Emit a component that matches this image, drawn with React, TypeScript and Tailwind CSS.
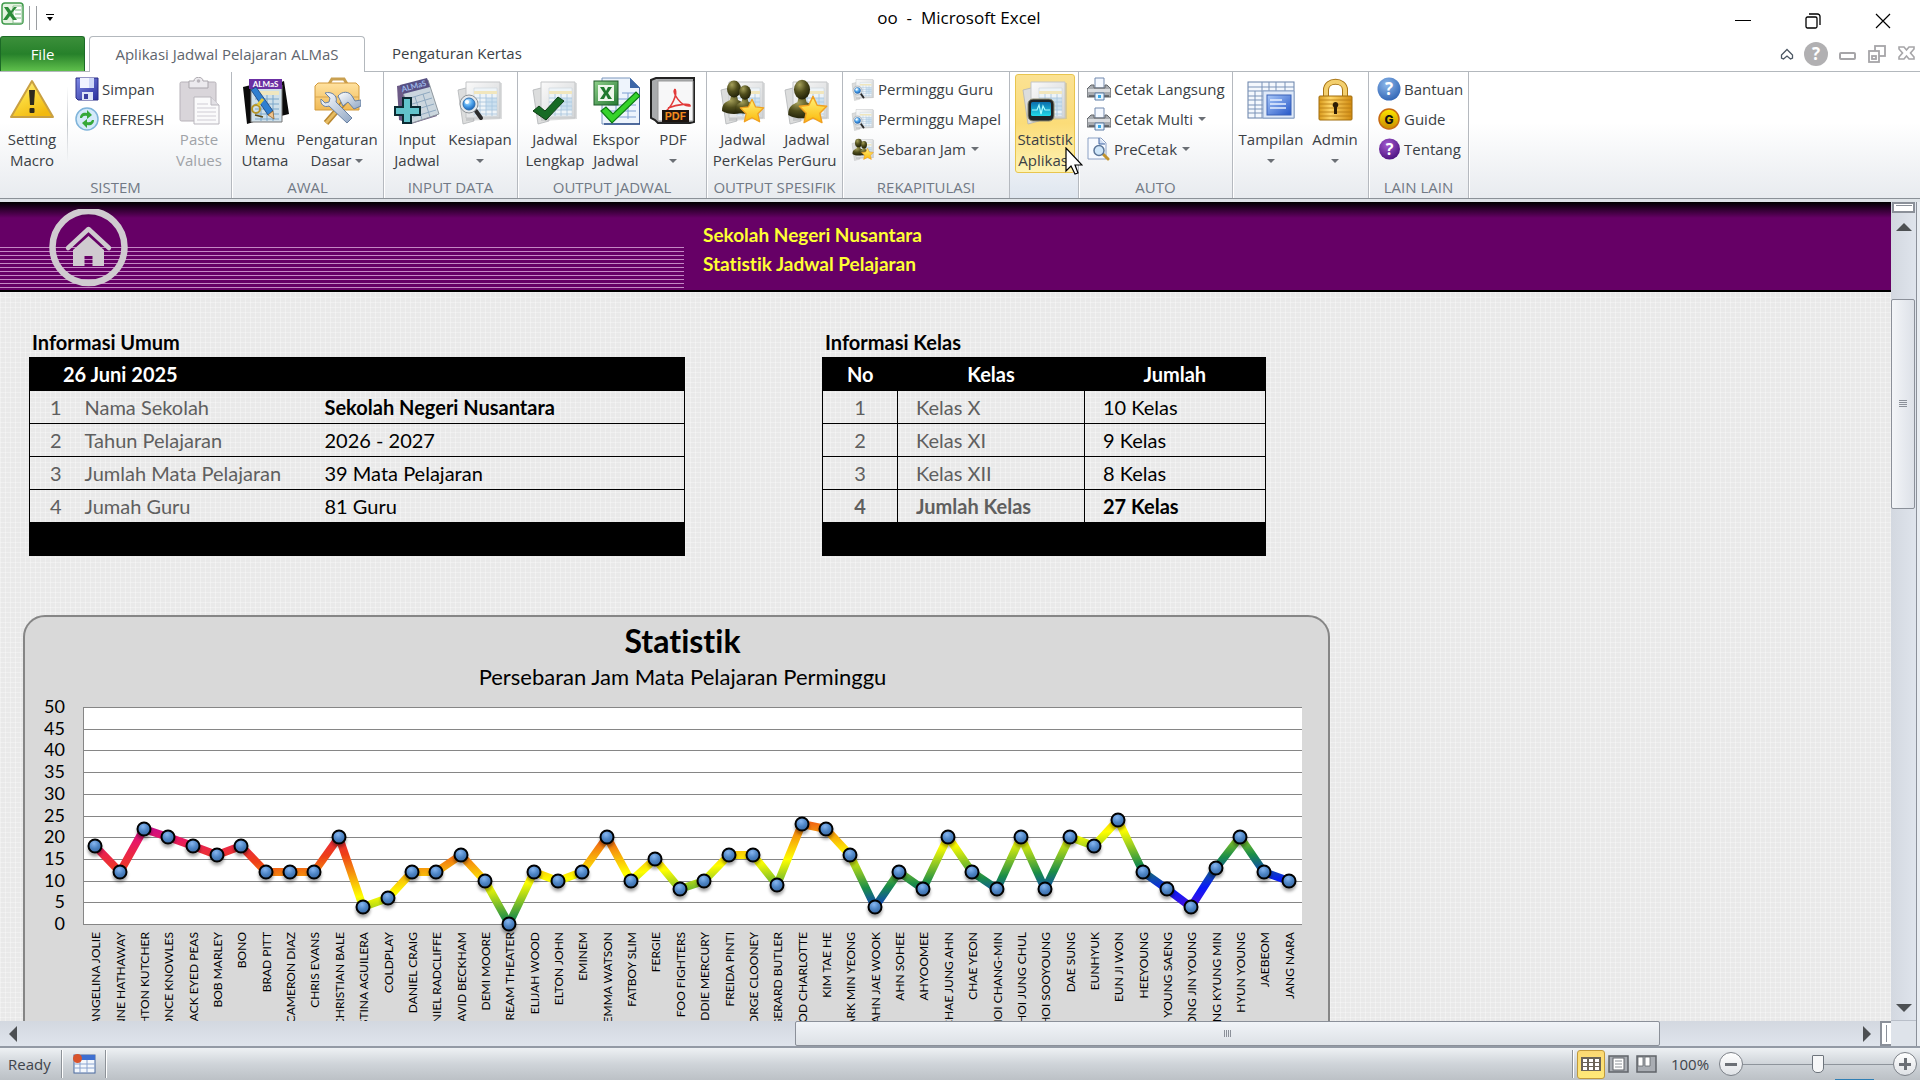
import React from "react";

type IconProps = { children: React.ReactNode; size?: "lg" | "sm" };

function Icon({ children, size = "lg" }: IconProps) {
  return size === "lg" ? (
    <svg viewBox="0 0 48 48" className="h-12 w-12 shrink-0" aria-hidden="true">
      {children}
    </svg>
  ) : (
    <svg viewBox="0 0 24 24" className="h-6 w-6 shrink-0" aria-hidden="true">
      {children}
    </svg>
  );
}

function Defs() {
  return (
    <svg className="absolute h-0 w-0" aria-hidden="true">
      <defs>
        <linearGradient id="warn" x1="0" y1="0" x2="0.6" y2="1">
          <stop offset="0" stopColor="#fff3a0" />
          <stop offset="0.5" stopColor="#fbd93b" />
          <stop offset="1" stopColor="#f2b90f" />
        </linearGradient>
        <linearGradient id="floppy" x1="0" y1="0" x2="1" y2="1">
          <stop offset="0" stopColor="#7f8be6" />
          <stop offset="1" stopColor="#2b2f9c" />
        </linearGradient>
        <linearGradient id="paper" x1="0" y1="0" x2="1" y2="1">
          <stop offset="0" stopColor="#fafafa" />
          <stop offset="1" stopColor="#d2d4d6" />
        </linearGradient>
        <linearGradient id="steel" x1="0" y1="0" x2="1" y2="1">
          <stop offset="0" stopColor="#ffffff" />
          <stop offset="1" stopColor="#8fa6c4" />
        </linearGradient>
        <linearGradient id="gold" x1="0" y1="0" x2="1" y2="0">
          <stop offset="0" stopColor="#d99a1c" />
          <stop offset="0.35" stopColor="#ffd768" />
          <stop offset="1" stopColor="#d08a10" />
        </linearGradient>
        <linearGradient id="case" x1="0" y1="0" x2="0" y2="1">
          <stop offset="0" stopColor="#ffe2a0" />
          <stop offset="1" stopColor="#f0b955" />
        </linearGradient>
        <linearGradient id="star" x1="0" y1="0" x2="0" y2="1">
          <stop offset="0" stopColor="#fff27a" />
          <stop offset="1" stopColor="#fbb90a" />
        </linearGradient>
        <linearGradient id="xl" x1="0" y1="0" x2="1" y2="1">
          <stop offset="0" stopColor="#8fcf8a" />
          <stop offset="1" stopColor="#257a34" />
        </linearGradient>
        <radialGradient id="olive" cx="0.35" cy="0.25" r="0.8">
          <stop offset="0" stopColor="#a5a05a" />
          <stop offset="0.5" stopColor="#4f4d1c" />
          <stop offset="1" stopColor="#1f1f08" />
        </radialGradient>
        <radialGradient id="lens" cx="0.4" cy="0.3" r="0.7">
          <stop offset="0" stopColor="#d8f1ff" />
          <stop offset="0.5" stopColor="#55aaf0" />
          <stop offset="1" stopColor="#1b64b8" />
        </radialGradient>
        <radialGradient id="blueball" cx="0.4" cy="0.3" r="0.75">
          <stop offset="0" stopColor="#8db8ea" />
          <stop offset="1" stopColor="#2f63b4" />
        </radialGradient>
        <radialGradient id="purpleball" cx="0.4" cy="0.3" r="0.75">
          <stop offset="0" stopColor="#a45bd0" />
          <stop offset="1" stopColor="#4a0f7e" />
        </radialGradient>
        <linearGradient id="guideball" x1="0" y1="0" x2="0" y2="1">
          <stop offset="0" stopColor="#ffe800" />
          <stop offset="1" stopColor="#c98a00" />
        </linearGradient>
        <linearGradient id="screen" x1="0" y1="0" x2="0" y2="1">
          <stop offset="0" stopColor="#0b6fae" />
          <stop offset="1" stopColor="#22d8e8" />
        </linearGradient>
        <linearGradient id="winblue" x1="0" y1="0" x2="1" y2="1">
          <stop offset="0" stopColor="#a9c8f8" />
          <stop offset="1" stopColor="#2657c8" />
        </linearGradient>
      </defs>
    </svg>
  );
}

function Docs() {
  return (
    <g>
      <path d="M2 13l12-3 4 34-11 3z" fill="#dcdddd" stroke="#b3b5b7" strokeWidth="0.8" />
      <path d="M10 6h36v36l-36 2z" fill="#9da0a3" opacity="0.35" />
      <path d="M10 5h34v36H10z" fill="url(#paper)" stroke="#c3c5c7" />
      <path d="M18 11h23v28H18z" fill="#eef4f8" stroke="#c9d3da" strokeWidth="0.6" />
      <path d="M18 14h23v3H18z" fill="#f1e6bd" />
      <path d="M18 21h23M18 25h23M18 29h23M18 33h23M18 37h23M24 17v22M30 17v22M36 17v22" stroke="#a3c1db" strokeWidth="0.8" />
      <path d="M30 21h11v12H30z" fill="#a9cbe6" opacity="0.5" />
    </g>
  );
}

function Star({ t }: { t: string }) {
  return (
    <g transform={t}>
      <path
        d="M0-13L4-4.500 13-3.500 6.500 3 8.500 12 0 7.500-8.500 12-6.500 3-13-3.500-4-4.500z"
        fill="url(#star)"
        stroke="#f0a020"
        strokeWidth="1.400"
        strokeLinejoin="round"
      />
    </g>
  );
}

const Person = ({ t }: { t: string }) => (
  <g transform={t}>
    <path d="M-12 26c0-8 4-9 8-11l1-4h6l1 4c4 2 8 3 8 11-6 4-18 4-24 0z" fill="url(#olive)" />
    <ellipse cx="0" cy="4" rx="7" ry="8.500" fill="url(#olive)" />
  </g>
);

const DocLens = () => (
  <>
    <Docs />
    <path d="M20 34l5 7" stroke="#2b2b2b" strokeWidth="4" strokeLinecap="round" />
    <circle cx="13" cy="27" r="9" fill="#e6e9ec" stroke="#8d9296" />
    <circle cx="13" cy="27" r="6" fill="url(#lens)" stroke="#2d6fb0" />
    <circle cx="11" cy="25" r="2" fill="#fff" />
  </>
);

const DocPeople = () => (
  <>
    <Docs />
    <Person t="translate(15 8)" />
    <Person t="translate(26 12) scale(0.85)" />
    <Star t="translate(33 34) scale(0.9)" />
  </>
);

const icons = {
  warning: (
    <Icon>
      <path d="M24 4L45 40H3z" fill="url(#warn)" stroke="#c9a042" strokeWidth="2" strokeLinejoin="round" />
      <path d="M21 13h6l-1 15h-4z" fill="#2f2a1d" />
      <rect x="21.500" y="31" width="5" height="5" rx="1" fill="#2f2a1d" />
    </Icon>
  ),
  save: (
    <Icon size="sm">
      <path d="M1 1h22v22H3l-2-2z" fill="url(#floppy)" stroke="#2a2c86" />
      <path d="M5 1h14v10H5z" fill="#f1f4ff" />
      <path d="M14 1h5v10h-5z" fill="#cfd8f7" />
      <path d="M7 15h11v8H7z" fill="#dfe5f7" />
      <path d="M9 17h4v5H9z" fill="#3c409f" />
    </Icon>
  ),
  refresh: (
    <Icon size="sm">
      <circle cx="12" cy="12" r="11" fill="#d4eafa" stroke="#7fb4da" strokeWidth="1.500" />
      <path d="M5 11c0-4 3-6 7-5V3l5 5-5 4V9c-3-.5-4 0-5 2z" fill="#35a838" />
      <path d="M19 13c0 4-3 6-7 5v3l-5-5 5-4v3c3 .5 4 0 5-2z" fill="#35a838" />
    </Icon>
  ),
  paste: (
    <Icon>
      <rect x="5" y="5" width="36" height="39" rx="1.500" fill="#d9d5da" stroke="#b7b2b9" />
      <path d="M14 4h5c0-5 9-5 9 0h5v7H14z" fill="#eceaee" stroke="#a9a5ab" />
      <circle cx="23.500" cy="4" r="1.800" fill="#b9b5bb" />
      <path d="M19 20h17l8 8v19H19z" fill="#fafafb" stroke="#b9b6bd" />
      <path d="M36 20v8h8" fill="#e2e0e5" stroke="#b9b6bd" />
      <path d="M22 27h11M22 31h19M22 35h19M22 39h19M22 43h19" stroke="#cfccd4" />
    </Icon>
  ),
  menu: (
    <Icon>
      <path d="M2 10l8-2 6 36-10 3zM38 6l5-2 5 33-8 2z" fill="#0b0b0b" />
      <path d="M10 8h31v37H10z" fill="#cfe0ea" stroke="#777" />
      <path d="M14 14h24v4H14z" fill="#efe6bf" />
      <path d="M14 22h24M14 27h24M14 32h24M14 37h24M14 42h24M20 18v26M26 18v26M32 18v26" stroke="#7aa6c9" />
      <path d="M8 2h33v10H8z" fill="#6b2fa3" />
      <text x="24.500" y="10" textAnchor="middle" fontSize="8" fontWeight="700" fill="#fff" fontFamily="Lato, sans-serif">ALMaS</text>
      <path d="M10 13l5-3 17 24-5 4z" fill="#2f7fd0" stroke="#173f78" strokeWidth="0.800" />
      <path d="M27 38l5-4 1 8z" fill="#f0c48c" stroke="#8a5a20" strokeWidth="0.700" />
      <circle cx="15" cy="32" r="4" fill="none" stroke="#b5952a" strokeWidth="2" />
      <path d="M17 28l5-6" stroke="#e2c93c" strokeWidth="3" />
      <path d="M14 38l8 2" stroke="#5b4a14" strokeWidth="1.500" />
    </Icon>
  ),
  tools: (
    <Icon>
      <path d="M16 7l3-5h12l3 5" fill="none" stroke="#c9a050" strokeWidth="3" />
      <path d="M2 9l3-3h38l3 3v24H2z" fill="url(#case)" stroke="#d29a3c" />
      <path d="M2 20h44" stroke="#d9a44c" />
      <path d="M34 22L13 46" stroke="#b8862f" strokeWidth="6" />
      <path d="M34 22L13 46" stroke="#e6bc62" strokeWidth="3" />
      <path d="M25 19c4-5 11-5 14 0l3 5 6-1v6l-7 3-6-7-5 4z" fill="url(#steel)" stroke="#6881a3" />
      <path
        d="M12 16l5 5-1 4-4 1-4-4c-1 5 3 9 8 7l18 17 5-5-16-16c2-6-4-11-11-9z"
        fill="url(#steel)"
        stroke="#6881a3"
      />
    </Icon>
  ),
  input: (
    <Icon>
      <path d="M4 9l28-6 12 36-26 8-12-4z" fill="#6c5a86" />
      <path d="M9 12l26-9 11 34-27 9z" fill="#cbd6de" stroke="#8f989e" />
      <path d="M7 8l27-7 3 9-27 7z" fill="#575083" />
      <text x="21" y="12" textAnchor="middle" fontSize="8" fontWeight="700" fill="#9db7e8" fontFamily="Lato, sans-serif" transform="rotate(-15 21 10)">ALMaS</text>
      <path d="M14 22l23-7M16 28l23-7M18 34l23-7M20 40l23-7M22 20l7 22M30 17l7 23" stroke="#8fa9c0" />
      <path d="M10 21h8v9h9v8h-9v8h-8v-8H2v-8h8z" fill="#62c3cb" stroke="#0b2b33" strokeWidth="2" />
    </Icon>
  ),
  lens: (
    <Icon>
      <DocLens />
    </Icon>
  ),
  check: (
    <Icon>
      <Docs />
      <path d="M2 34l6-5 6 5 13-14 6 4-18 19z" fill="#176b25" stroke="#0d3d14" />
    </Icon>
  ),
  excel: (
    <Icon>
      <path d="M10 1h28l10 10v36H10z" fill="#eef4fc" stroke="#7b96bd" />
      <path d="M38 1v10h10z" fill="#3d67a8" />
      <path d="M30 16h14M16 22h28M16 28h28M16 34h28M16 40h28M24 22v20M36 16v26" stroke="#7fa0d2" />
      <path d="M48 11v36H12" fill="none" stroke="#2c4c86" strokeWidth="1.500" />
      <rect x="2" y="4" width="24" height="24" fill="url(#xl)" stroke="#1f5c29" />
      <rect x="6" y="8" width="16" height="16" fill="#eef7ec" />
      <path d="M8 10h4l2 4 2-4h4l-4 6 4 6h-4l-2-4-2 4H8l4-6z" fill="#1f7a2e" />
      <path d="M9 34l5-4 7 7 23-22 4 4-28 27z" fill="#36d32b" stroke="#0c7a12" strokeWidth="1.200" />
    </Icon>
  ),
  pdf: (
    <Icon>
      <path d="M2 3l5-2h38v44l-4 1H9l-3-3-4-2z" fill="#a9abad" stroke="#222" strokeWidth="2" />
      <path d="M9 4h35v40H9z" fill="#f7f7f8" stroke="#999" />
      <path d="M26 12c3 6-4 18-9 22M26 12c-3 4 6 18 15 17 1-3-12-2-22 2" fill="none" stroke="#e23b3b" strokeWidth="1.600" />
      <rect x="13" y="33" width="27" height="12" fill="#1d1511" />
      <text x="26.500" y="43" textAnchor="middle" fontSize="11" fontWeight="700" fill="#f08a1d" fontFamily="Inter, sans-serif">PDF</text>
    </Icon>
  ),
  people: (
    <Icon>
      <DocPeople />
    </Icon>
  ),
  person: (
    <Icon>
      <Docs />
      <Person t="translate(19 8) scale(1.15)" />
      <Star t="translate(30 33) scale(1.05)" />
    </Icon>
  ),
  monitor: (
    <Icon>
      <Docs />
      <rect x="7" y="22" width="26" height="22" rx="5" fill="#1f2326" stroke="#8d8a70" />
      <rect x="10" y="25" width="20" height="14" rx="1.500" fill="url(#screen)" />
      <path d="M11 33h5l2-5 2 9 2-8 2 4h5" fill="none" stroke="#a8fbff" strokeWidth="1.200" />
    </Icon>
  ),
  window: (
    <Icon>
      <rect x="1" y="5" width="46" height="36" fill="#f4f8fd" stroke="#6780a8" />
      <path d="M1 10h46M1 14h46M1 19h16M1 23h16M1 28h16M1 32h16M1 36h16M8 14v27M15 5v36M29 5v9M38 5v9M22 5v9" stroke="#7b93b8" />
      <path d="M16 14h31v27H16z" fill="#dfe9f8" stroke="#8aa3c8" />
      <rect x="20" y="18" width="24" height="20" fill="url(#winblue)" stroke="#3b63b8" />
      <path d="M23 23h12M23 27h16M23 31h16" stroke="#e8f1ff" strokeWidth="1.500" />
    </Icon>
  ),
  lock: (
    <Icon>
      <path d="M15 20v-7c0-11 19-11 19 0v7" fill="none" stroke="#a87414" strokeWidth="6" />
      <path d="M15 20v-7c0-11 19-11 19 0v7" fill="none" stroke="#f3cf6e" strokeWidth="4" />
      <rect x="8" y="19" width="33" height="24" rx="1" fill="url(#gold)" stroke="#a06c0d" />
      <path d="M8 23h33M8 27h33M8 31h33M8 35h33M8 39h33" stroke="#b57a12" strokeWidth="0.800" />
      <path d="M24.500 25a3 3 0 011.500 5.500V37h-3v-6.500A3 3 0 0124.500 25z" fill="#2d1d05" />
    </Icon>
  ),
  lensSm: (
    <Icon size="sm">
      <g transform="scale(0.5)">
        <DocLens />
      </g>
    </Icon>
  ),
  peopleSm: (
    <Icon size="sm">
      <g transform="scale(0.5)">
        <DocPeople />
      </g>
    </Icon>
  ),
  printer: (
    <Icon size="sm">
      <path d="M8 1h9v10H8z" fill="#f4f8ff" stroke="#7088ad" />
      <path d="M4 8h3v3h11V8h2l4 4v8H0v-8z" fill="#a7abb0" stroke="#62666b" />
      <path d="M1 12h22v3H1z" fill="#dadcdf" />
      <path d="M2 19h20" stroke="#55595e" strokeWidth="1.500" />
      <path d="M8 16h9v7H8z" fill="#e5f4ff" stroke="#5d7da5" />
      <path d="M11 18h3v3h-3z" fill="#36a8e8" />
    </Icon>
  ),
  preview: (
    <Icon size="sm">
      <path d="M1 1h13l5 5v16H1z" fill="#f7faff" stroke="#8ba0c4" />
      <path d="M12 1v6h6" fill="#ccdaf0" stroke="#3f63a0" />
      <path d="M16 17l5 5" stroke="#c2932d" strokeWidth="3" strokeLinecap="round" />
      <circle cx="12" cy="13.500" r="5" fill="#cfe6fa" stroke="#5c7699" strokeWidth="1.500" />
    </Icon>
  ),
  help: (
    <Icon size="sm">
      <circle cx="12" cy="12" r="11.500" fill="url(#blueball)" />
      <text x="12" y="18" textAnchor="middle" fontSize="17" fontWeight="700" fill="#fff" fontFamily="Open Sans, sans-serif">?</text>
    </Icon>
  ),
  guide: (
    <Icon size="sm">
      <circle cx="12" cy="12" r="10" fill="url(#guideball)" stroke="#c76a12" strokeWidth="1.500" />
      <text x="12" y="16.500" textAnchor="middle" fontSize="12" fontWeight="800" fill="#111" fontFamily="Inter, sans-serif">G</text>
    </Icon>
  ),
  about: (
    <Icon size="sm">
      <circle cx="12.500" cy="12" r="10.500" fill="url(#purpleball)" />
      <text x="12.500" y="18" textAnchor="middle" fontSize="16" fontWeight="700" fill="#fff" fontFamily="Open Sans, sans-serif">?</text>
    </Icon>
  ),
};

function Caret() {
  return <span className="inline-block h-0 w-0 border-x-4 border-t-4 border-x-transparent border-t-[#6b6f75]" />;
}

type BigProps = {
  icon: React.ReactNode;
  top: string;
  bottom?: string;
  caret?: boolean;
  width: string;
  active?: boolean;
  disabled?: boolean;
};

function BigButton({ icon, top, bottom, caret, width, active, disabled }: BigProps) {
  return (
    <button
      type="button"
      disabled={disabled}
      className={`${width} flex h-[99px] shrink-0 flex-col items-center rounded-[3px] border whitespace-nowrap ${
        active
          ? "border-[#e8c54e] bg-linear-to-b from-[#fbe293] via-[#fbdc78] to-[#fdf3b4]"
          : "border-transparent"
      } ${disabled ? "text-[#a0a3a8]" : "text-[#3b3f45]"}`}
    >
      <span className="flex h-[54px] items-start pt-0.5">{icon}</span>
      <span className="h-[21px] leading-[21px]">{top}</span>
      <span className="flex h-[21px] items-center gap-1 leading-[21px]">
        {bottom}
        {caret && <Caret />}
      </span>
    </button>
  );
}

function SmallButton({ icon, label, caret }: { icon: React.ReactNode; label: string; caret?: boolean }) {
  return (
    <button type="button" className="flex h-[30px] items-center gap-[3px] whitespace-nowrap text-[#3b3f45]">
      {icon}
      <span>{label}</span>
      {caret && (
        <span className="flex pl-0.5">
          <Caret />
        </span>
      )}
    </button>
  );
}

function Group({
  title,
  width,
  pad,
  hot,
  children,
}: {
  title: string;
  width: string;
  pad: string;
  hot?: boolean;
  children: React.ReactNode;
}) {
  return (
    <section
      aria-label={title || "Statistik"}
      className={`${width} flex shrink-0 flex-col border-r border-[#b5b9bf] shadow-[1px_0_0_#fff] ${
        hot ? "bg-linear-to-b from-white from-40% to-[#dfe6ef]" : ""
      }`}
    >
      <div className={`${pad} flex h-[104px] items-start pt-0.5`}>{children}</div>
      <div className="text-center leading-[22px] whitespace-nowrap text-[#717985]">{title}</div>
    </section>
  );
}

function TitleBar() {
  return (
    <header className="flex h-9 shrink-0 items-center bg-white">
      <div className="flex flex-1 items-start">
        <svg viewBox="0 0 24 24" className="-mt-1 ml-px h-6 w-6" aria-label="Excel">
          <rect x="1" y="1" width="21" height="21" rx="3" fill="#e5f3e1" stroke="#3f9a4b" strokeWidth="1.500" />
          <path d="M12 4h9v17h-9z" fill="#fff" stroke="#8cbf90" />
          <path d="M14 8h6M14 12h6M14 16h6" stroke="#7dbb84" />
          <path d="M3 5h4l3 4 3-4h3l-5 6 5 7h-4l-3-4-3 4H2l5-7z" fill="#2c8b39" />
        </svg>
        <span className="ml-1 h-6 w-[8px] border-x border-[#9a9da1]" />
        <button type="button" aria-label="Kustomisasi" className="ml-2 mt-2 flex w-2.5 flex-col items-center gap-0.5">
          <span className="h-px w-2 bg-black" />
          <span className="h-0 w-0 border-x-[3px] border-t-[4px] border-x-transparent border-t-black" />
        </button>
      </div>
      <h1 className="text-[17px] whitespace-pre text-black">oo  -  Microsoft Excel</h1>
      <div className="flex flex-1 justify-end pr-0.5 text-black">
        <button type="button" aria-label="Minimize" className="flex w-[70px] items-center justify-center pt-1.5">
          <svg viewBox="0 0 16 16" className="h-4 w-4"><path d="M0 7.500h16" stroke="currentColor" /></svg>
        </button>
        <button type="button" aria-label="Restore" className="flex w-[70px] items-center justify-center pt-1.5">
          <svg viewBox="0 0 16 16" className="h-4 w-4" fill="none" stroke="currentColor" strokeWidth="1.300">
            <rect x="1" y="4" width="11" height="11" rx="1.500" />
            <path d="M4 1h8.500a2.500 2.500 0 012.500 2.500V12" />
          </svg>
        </button>
        <button type="button" aria-label="Close" className="flex w-[70px] items-center justify-center pt-1.5">
          <svg viewBox="0 0 16 16" className="h-4 w-4"><path d="M1 1l14 14M15 1L1 15" stroke="currentColor" strokeWidth="1.200" /></svg>
        </button>
      </div>
    </header>
  );
}

function Tabs() {
  return (
    <nav className="flex h-9 shrink-0 items-stretch border-b border-[#b3b8bd] bg-white text-[15px]">
      <button
        type="button"
        className="w-[85px] rounded-t-[3px] border border-b-0 border-[#1c6a26] bg-linear-to-b from-[#3b8f3a] via-[#26812a] to-[#5fc04c] text-white"
      >
        File
      </button>
      <button
        type="button"
        className="-mb-px ml-1 w-[276px] rounded-t-[4px] border border-b-0 border-[#b3b8bd] bg-white whitespace-nowrap text-[#60656d]"
      >
        Aplikasi Jadwal Pelajaran ALMaS
      </button>
      <button type="button" className="ml-[27px] whitespace-nowrap text-[#3b3f45]">
        Pengaturan Kertas
      </button>
      <div className="ml-auto flex items-center pr-[5px]">
        <button type="button" aria-label="Ciutkan pita" className="mr-2.5">
          <svg viewBox="0 0 14 12" className="h-3 w-[14px]" fill="#fff" stroke="#4c5763" strokeWidth="1.300">
            <path d="M7 1.500L12.500 7v3l-2 1L7 8l-3.500 3-2-1V7z" />
          </svg>
        </button>
        <button type="button" aria-label="Bantuan Excel" className="mr-[11px]">
          <svg viewBox="0 0 24 24" className="h-6 w-6">
            <circle cx="12" cy="12" r="12" fill="#b1b0b2" />
            <text x="12" y="18" textAnchor="middle" fontSize="17" fontWeight="700" fill="#fff" fontFamily="Open Sans, sans-serif">?</text>
          </svg>
        </button>
        <button type="button" aria-label="Minimize buku" className="mr-3">
          <svg viewBox="0 0 17 17" className="h-[17px] w-[17px]"><rect x="1" y="8" width="15" height="6" rx="1" fill="#fff" stroke="#a6a5a8" strokeWidth="2" /></svg>
        </button>
        <button type="button" aria-label="Restore buku" className="mr-3">
          <svg viewBox="0 0 18 18" className="h-[18px] w-[18px]" fill="#fff" stroke="#a6a5a8" strokeWidth="1.800">
            <rect x="7" y="1" width="10" height="10" />
            <rect x="1" y="6" width="10" height="11" />
            <rect x="4" y="11" width="4" height="3" />
          </svg>
        </button>
        <button type="button" aria-label="Tutup buku">
          <svg viewBox="0 0 17 17" className="h-[17px] w-[17px]" fill="#fff" stroke="#a6a5a8" strokeWidth="1.600">
            <path d="M1 2h5l2.500 3L11 2h5v2l-3.500 4L16 12v2h-5l-2.500-3L6 14H1v-2l3.500-4L1 4z" />
          </svg>
        </button>
      </div>
    </nav>
  );
}

function Ribbon() {
  return (
    <div className="flex h-[126px] shrink-0 bg-linear-to-b from-white from-40% to-[#e8ebef] text-[15px]">
      <Group title="SISTEM" width="w-[232px]" pad="pl-0">
        <BigButton icon={icons.warning} top="Setting" bottom="Macro" width="w-16" />
        <span className="mx-[3px] mt-3 h-[76px] w-px bg-linear-to-b from-transparent via-[#c3c7cc] to-transparent" />
        <div className="ml-1 flex w-[95px] flex-col">
          <SmallButton icon={icons.save} label="Simpan" />
          <SmallButton icon={icons.refresh} label="REFRESH" />
        </div>
        <BigButton icon={icons.paste} top="Paste" bottom="Values" width="w-[58px]" disabled />
      </Group>
      <Group title="AWAL" width="w-[152px]" pad="pl-0.5">
        <BigButton icon={icons.menu} top="Menu" bottom="Utama" width="w-[62px]" />
        <BigButton icon={icons.tools} top="Pengaturan" bottom="Dasar" caret width="w-[82px]" />
      </Group>
      <Group title="INPUT DATA" width="w-[134px]" pad="pl-1">
        <BigButton icon={icons.input} top="Input" bottom="Jadwal" width="w-[58px]" />
        <BigButton icon={icons.lens} top="Kesiapan" caret width="w-[68px]" />
      </Group>
      <Group title="OUTPUT JADWAL" width="w-[189px]" pad="pl-1">
        <BigButton icon={icons.check} top="Jadwal" bottom="Lengkap" width="w-[66px]" />
        <BigButton icon={icons.excel} top="Ekspor" bottom="Jadwal" width="w-[56px]" />
        <BigButton icon={icons.pdf} top="PDF" caret width="w-[58px]" />
      </Group>
      <Group title="OUTPUT SPESIFIK" width="w-[136px]" pad="pl-1">
        <BigButton icon={icons.people} top="Jadwal" bottom="PerKelas" width="w-16" />
        <BigButton icon={icons.person} top="Jadwal" bottom="PerGuru" width="w-16" />
      </Group>
      <Group title="REKAPITULASI" width="w-[167px]" pad="pl-2">
        <div className="flex flex-col">
          <SmallButton icon={icons.lensSm} label="Perminggu Guru" />
          <SmallButton icon={icons.lensSm} label="Perminggu Mapel" />
          <SmallButton icon={icons.peopleSm} label="Sebaran Jam" caret />
        </div>
      </Group>
      <Group title="" width="w-[69px]" pad="pl-[5px]" hot>
        <BigButton icon={icons.monitor} top="Statistik" bottom="Aplikasi" width="w-[60px]" active />
      </Group>
      <Group title="AUTO" width="w-[154px]" pad="pl-2">
        <div className="flex flex-col">
          <SmallButton icon={icons.printer} label="Cetak Langsung" />
          <SmallButton icon={icons.printer} label="Cetak Multi" caret />
          <SmallButton icon={icons.preview} label="PreCetak" caret />
        </div>
      </Group>
      <Group title="" width="w-[136px]" pad="pl-1">
        <BigButton icon={icons.window} top="Tampilan" caret width="w-[68px]" />
        <BigButton icon={icons.lock} top="Admin" caret width="w-[60px]" />
      </Group>
      <Group title="LAIN LAIN" width="w-[100px]" pad="pl-2">
        <div className="flex flex-col">
          <SmallButton icon={icons.help} label="Bantuan" />
          <SmallButton icon={icons.guide} label="Guide" />
          <SmallButton icon={icons.about} label="Tentang" />
        </div>
      </Group>
    </div>
  );
}

function Banner() {
  return (
    <div className="flex h-[90px] shrink-0 border-b-2 border-black bg-linear-to-b/srgb from-black to-[#660066] to-[16px]">
      <div className="flex w-[684px] shrink-0 flex-col justify-end">
        <div className="h-[88px] bg-[repeating-linear-gradient(to_bottom,#c488c4_0px,#c488c4_1px,transparent_1px,transparent_4px)] bg-[length:100%_43px] bg-bottom bg-no-repeat pl-[49px] pt-[7px]">
          <a href="#beranda" aria-label="Beranda" className="block h-[78px] w-[80px]">
            <svg viewBox="0 0 80 78" className="h-[78px] w-20">
              <circle cx="39.500" cy="38" r="36" fill="none" stroke="#d0cbd0" strokeWidth="6.500" />
              <path d="M19 39L39.500 20 60 39" fill="none" stroke="#d0cbd0" strokeWidth="4.500" strokeLinecap="round" strokeLinejoin="round" />
              <path d="M39.500 27L55 41v16H43.500V47h-8v10H24V41z" fill="#d0cbd0" />
            </svg>
          </a>
        </div>
      </div>
      <div className="flex flex-col pl-[19px] pt-[18px] text-[19px] leading-[29px] font-bold whitespace-nowrap text-[#ffff33]">
        <p>Sekolah Negeri Nusantara</p>
        <p>Statistik Jadwal Pelajaran</p>
      </div>
    </div>
  );
}

const umum = [
  ["1", "Nama Sekolah", "Sekolah Negeri Nusantara"],
  ["2", "Tahun Pelajaran", "2026 - 2027"],
  ["3", "Jumlah Mata Pelajaran", "39 Mata Pelajaran"],
  ["4", "Jumah Guru", "81 Guru"],
];

const kelas = [
  ["1", "Kelas X", "10 Kelas"],
  ["2", "Kelas XI", "9 Kelas"],
  ["3", "Kelas XII", "8 Kelas"],
  ["4", "Jumlah Kelas", "27 Kelas"],
];

function Tables() {
  return (
    <div className="flex shrink-0 items-start pl-[29px] pt-9 text-[20px] leading-[30px] whitespace-nowrap">
      <section>
        <h2 className="h-[29px] pl-[3px] leading-7 font-bold text-black">Informasi Umum</h2>
        <table className="w-[656px] table-fixed border-collapse border border-black text-left">
          <colgroup>
            <col className="w-[52px]" />
            <col className="w-[240px]" />
            <col />
          </colgroup>
          <thead className="bg-black text-white">
            <tr className="h-[33px]">
              <th colSpan={3} className="pl-[33px]">26 Juni 2025</th>
            </tr>
          </thead>
          <tbody>
            {umum.map(([no, label, value], i) => (
              <tr key={no} className="h-[33px] border-b border-black">
                <td className="text-center text-[#5f5f5f]">{no}</td>
                <td className="pl-[3px] text-[#5f5f5f]">{label}</td>
                <td className={i === 0 ? "pl-[3px] font-bold text-black" : "pl-[3px] text-black"}>{value}</td>
              </tr>
            ))}
          </tbody>
          <tfoot className="bg-black">
            <tr className="h-[33px]">
              <td colSpan={3} />
            </tr>
          </tfoot>
        </table>
      </section>
      <section className="ml-[137px]">
        <h2 className="h-[29px] pl-[3px] leading-7 font-bold text-black">Informasi Kelas</h2>
        <table className="w-[444px] table-fixed border-collapse border border-black">
          <colgroup>
            <col className="w-[75px]" />
            <col className="w-[187px]" />
            <col />
          </colgroup>
          <thead className="bg-black text-white">
            <tr className="h-[33px]">
              <th>No</th>
              <th>Kelas</th>
              <th>Jumlah</th>
            </tr>
          </thead>
          <tbody>
            {kelas.map(([no, label, value], i) => (
              <tr key={no} className={i === 3 ? "h-[33px] border-b border-black font-bold" : "h-[33px] border-b border-black"}>
                <td className="border-r border-black text-center text-[#5f5f5f]">{no}</td>
                <td className="border-r border-black pl-[18px] text-[#5f5f5f]">{label}</td>
                <td className="pl-[18px] text-black">{value}</td>
              </tr>
            ))}
          </tbody>
          <tfoot className="bg-black">
            <tr className="h-[33px]">
              <td colSpan={3} />
            </tr>
          </tfoot>
        </table>
      </section>
    </div>
  );
}

const data: [string, number][] = [
  ["ANGELINA JOLIE", 18], ["ANNE HATHAWAY", 12], ["ASHTON KUTCHER", 22], ["BEYONCE KNOWLES", 20],
  ["BLACK EYED PEAS", 18], ["BOB MARLEY", 16], ["BONO", 18], ["BRAD PITT", 12], ["CAMERON DIAZ", 12],
  ["CHRIS EVANS", 12], ["CHRISTIAN BALE", 20], ["CHRISTINA AGUILERA", 4], ["COLDPLAY", 6],
  ["DANIEL CRAIG", 12], ["DANIEL RADCLIFFE", 12], ["DAVID BECKHAM", 16], ["DEMI MOORE", 10],
  ["DREAM THEATER", 0], ["ELIJAH WOOD", 12], ["ELTON JOHN", 10], ["EMINEM", 12], ["EMMA WATSON", 20],
  ["FATBOY SLIM", 10], ["FERGIE", 15], ["FOO FIGHTERS", 8], ["FREDDIE MERCURY", 10], ["FREIDA PINTI", 16],
  ["GEORGE CLOONEY", 16], ["GERARD BUTLER", 9], ["GOOD CHARLOTTE", 23], ["KIM TAE HE", 22],
  ["PARK MIN YEONG", 16], ["AHN JAE WOOK", 4], ["AHN SOHEE", 12], ["AHYOOMEE", 8], ["CHAE JUNG AHN", 20],
  ["CHAE YEON", 12], ["CHOI CHANG-MIN", 8], ["CHOI JUNG CHUL", 20], ["CHOI SOOYOUNG", 8], ["DAE SUNG", 20],
  ["EUNHYUK", 18], ["EUN JI WON", 24], ["HEEYOUNG", 12], ["HEO YOUNG SAENG", 8], ["HONG JIN YOUNG", 4],
  ["HWANG KYUNG MIN", 13], ["HYUN YOUNG", 20], ["JAEBEOM", 12], ["JANG NARA", 10],
];

const LEFT = 58;
const RIGHT = 1276;
const TOP = 10;
const BASE = 227;

function Chart() {
  const step = (RIGHT - LEFT) / data.length;
  const pts = data.map(([name, v], i) => ({
    name,
    x: Math.round(LEFT + (i + 0.5) * step),
    y: Math.round(BASE - (v * (BASE - TOP)) / 50),
  }));
  const ticks = Array.from({ length: 11 }, (_, i) => i * 5);
  return (
    <section className="ml-[23px] mt-[59px] h-[600px] w-[1307px] shrink-0 rounded-[22px] border-2 border-[#868686] bg-[#d9d9d9] text-black">
      <div className="pl-3 text-center">
        <h2 className="pt-1 text-[32px] leading-[40px] font-bold">Statistik</h2>
        <p className="text-[22px] leading-[32px]">Persebaran Jam Mata Pelajaran Perminggu</p>
      </div>
      <svg viewBox="0 0 1303 400" className="mt-1 h-[400px] w-[1303px]" role="img" aria-label="Statistik persebaran jam">
        <defs>
          <linearGradient id="rainbow" x1="0" y1="0" x2="1" y2="1">
            <stop offset="0" stopColor="#a603ab" />
            <stop offset="0.12" stopColor="#e81766" />
            <stop offset="0.27" stopColor="#ee3f17" />
            <stop offset="0.48" stopColor="#ffff00" />
            <stop offset="0.65" stopColor="#1a8d48" />
            <stop offset="0.79" stopColor="#0819fb" />
            <stop offset="1" stopColor="#a603ab" />
          </linearGradient>
          <radialGradient id="marker" cx="0.42" cy="0.3" r="0.75">
            <stop offset="0" stopColor="#86b6f0" />
            <stop offset="0.5" stopColor="#4f86c6" />
            <stop offset="1" stopColor="#33629c" />
          </radialGradient>
          <filter id="drop" x="-5%" y="-20%" width="110%" height="150%">
            <feDropShadow dx="0" dy="3" stdDeviation="1.500" floodColor="#000" floodOpacity="0.35" />
          </filter>
        </defs>
        <rect x={LEFT} y={TOP} width={RIGHT - LEFT + 1} height={BASE - TOP} fill="#fff" />
        {ticks.map((t) => {
          const y = Math.round(BASE - (t * (BASE - TOP)) / 50);
          return (
            <g key={t}>
              <rect x={LEFT} y={y} width={RIGHT - LEFT + 1} height="1" fill="#868686" />
              <text x="40" y={y + 6} textAnchor="end" fontSize="18">{t}</text>
            </g>
          );
        })}
        <rect x={LEFT} y={TOP} width="1" height={BASE - TOP} fill="#868686" />
        {pts.map((p) => (
          <text key={p.name} transform={`translate(${p.x + 5} 235) rotate(-90)`} textAnchor="end" fontSize="12">
            {p.name}
          </text>
        ))}
        <polyline points={pts.map((p) => `${p.x},${p.y}`).join(" ")} fill="none" stroke="url(#rainbow)" strokeWidth="8" strokeLinejoin="round" />
        <g filter="url(#drop)">
          {pts.map((p) => (
            <circle key={p.name} cx={p.x} cy={p.y} r="6.500" fill="url(#marker)" stroke="#000" strokeWidth="2" />
          ))}
        </g>
      </svg>
    </section>
  );
}

function VScroll() {
  return (
    <div className="flex w-[29px] shrink-0 bg-[#e9edf2]">
      <div className="flex w-[26px] flex-col items-stretch border-r border-[#8b9099] bg-linear-to-r from-[#d3d8e0] to-[#dfe4ec]">
        <div className="mx-px flex h-[11px] justify-center border-2 border-[#8b9099] bg-white pt-px">
          <span className="h-px w-4 bg-[#8b9099]" />
        </div>
        <button type="button" aria-label="Gulir ke atas" className="flex h-[27px] items-center justify-center">
          <span className="h-0 w-0 border-x-8 border-b-8 border-x-transparent border-b-[#4d5053]" />
        </button>
        <div className="flex flex-1 flex-col pr-px">
          <div className="flex-[59]" />
          <div className="flex flex-[208] flex-col items-center justify-center gap-px rounded-[2px] border border-[#8b9099] bg-linear-to-r from-[#f3f5f8] to-[#dde1e8]">
            <span className="h-px w-2 bg-[#8b9099]" />
            <span className="h-px w-2 bg-[#8b9099]" />
            <span className="h-px w-2 bg-[#8b9099]" />
            <span className="h-px w-2 bg-[#8b9099]" />
          </div>
          <div className="flex-[487]" />
        </div>
        <button type="button" aria-label="Gulir ke bawah" className="flex h-[25px] items-center justify-center">
          <span className="h-0 w-0 border-x-8 border-t-8 border-x-transparent border-t-[#4d5053]" />
        </button>
        <div className="h-[26px] border-t border-[#b9bfc9] bg-[#dee3ea]" />
      </div>
    </div>
  );
}

function HScroll() {
  return (
    <div className="flex h-[25px] shrink-0 bg-linear-to-b from-[#d3d8e0] to-[#dfe4ec]">
      <button type="button" aria-label="Gulir ke kiri" className="flex w-[26px] items-center justify-center">
        <span className="h-0 w-0 border-y-8 border-r-8 border-y-transparent border-r-[#4d5053]" />
      </button>
      <div className="flex flex-1">
        <div className="flex-[770]" />
        <div className="flex flex-[864] items-center justify-center gap-px rounded-[2px] border border-[#8b9099] bg-linear-to-b from-[#f1f4f8] to-[#dde1e6]">
          <span className="h-[7px] w-px bg-[#8b9099]" />
          <span className="h-[7px] w-px bg-[#8b9099]" />
          <span className="h-[7px] w-px bg-[#8b9099]" />
          <span className="h-[7px] w-px bg-[#8b9099]" />
        </div>
        <div className="flex-[194]" />
      </div>
      <button type="button" aria-label="Gulir ke kanan" className="flex w-[26px] items-center justify-center">
        <span className="h-0 w-0 border-y-8 border-l-8 border-y-transparent border-l-[#4d5053]" />
      </button>
      <div className="flex w-[11px] justify-center border-2 border-r-0 border-[#8b9099] bg-white py-0.5">
        <span className="w-px bg-[#8b9099]" />
      </div>
    </div>
  );
}

function StatusBar() {
  return (
    <footer className="flex h-[34px] shrink-0 items-center border-t-2 border-[#939aa5] bg-linear-to-b from-[#eef1f4] via-[#cfd4d9] to-[#bcc1c6] text-[15px] text-[#3f444b]">
      <span className="w-[61px] pl-2 leading-7">Ready</span>
      <span className="h-7 w-0.5 border-l border-[#8d9298] bg-white" />
      <button type="button" aria-label="Rekam makro" className="flex w-[42px] justify-center">
        <svg viewBox="0 0 24 22" className="h-[22px] w-6">
          <rect x="2" y="2" width="21" height="18" fill="#f4f8fd" stroke="#49689e" />
          <rect x="2" y="2" width="21" height="5" fill="#3f6fd0" />
          <path d="M2 11h21M2 15h21M8 7v13M15 7v13" stroke="#8aa3cf" />
          <circle cx="5.500" cy="5.500" r="4.500" fill="#d9532b" />
        </svg>
      </button>
      <span className="h-7 w-0.5 border-l border-[#8d9298] bg-white" />
      <span className="ml-auto h-7 w-0.5 border-l border-[#8d9298] bg-white" />
      <button type="button" aria-label="Normal" className="ml-[3px] flex h-[29px] w-7 items-center justify-center rounded-[3px] border border-[#c19a3c] bg-linear-to-b from-[#fbd873] to-[#ffe978]">
        <svg viewBox="0 0 20 16" className="h-4 w-5">
          <rect x="0" y="1" width="20" height="14" fill="#6b6458" />
          <path d="M2 3h4v3H2zM8 3h4v3H8zM14 3h4v3h-4zM2 7h4v3H2zM8 7h4v3H8zM14 7h4v3h-4zM2 11h4v3H2zM8 11h4v3H8zM14 11h4v3h-4z" fill="#fff" />
        </svg>
      </button>
      <button type="button" aria-label="Tata letak halaman" className="ml-[3px]">
        <svg viewBox="0 0 21 18" className="h-[18px] w-[21px]">
          <rect x="1" y="1" width="19" height="16" fill="#a9adb3" stroke="#60646a" strokeWidth="1.500" />
          <rect x="5" y="3" width="11" height="12" fill="#fff" stroke="#60646a" />
          <path d="M7 6h7M7 9h7M7 12h7" stroke="#8d9298" />
        </svg>
      </button>
      <button type="button" aria-label="Pratinjau pemisah" className="ml-[7px]">
        <svg viewBox="0 0 21 18" className="h-[18px] w-[21px]">
          <rect x="1" y="1" width="19" height="16" fill="#a9adb3" stroke="#60646a" strokeWidth="1.500" />
          <path d="M2 2h5v9H2zM9 2h5v9H9z" fill="#fff" stroke="#60646a" strokeWidth="0.800" />
        </svg>
      </button>
      <span className="w-[62px] pl-1 text-center leading-7">100%</span>
      <button type="button" aria-label="Perkecil" className="flex h-6 w-6 items-center justify-center rounded-full border border-[#7c8188] bg-linear-to-b from-white to-[#dfe2e6]">
        <span className="h-[3px] w-3 bg-[#6b6f75]" />
      </button>
      <input
        type="range"
        aria-label="Zoom"
        min={0}
        max={100}
        defaultValue={50}
        className="h-6 w-[150px] appearance-none bg-linear-to-b from-[#8e949b] to-[#8e949b] bg-[length:100%_1px] bg-center bg-no-repeat [&::-webkit-slider-thumb]:h-[18px] [&::-webkit-slider-thumb]:w-3 [&::-webkit-slider-thumb]:appearance-none [&::-webkit-slider-thumb]:rounded-t-[1px] [&::-webkit-slider-thumb]:rounded-b-[5px] [&::-webkit-slider-thumb]:border [&::-webkit-slider-thumb]:border-[#6d747c] [&::-webkit-slider-thumb]:bg-[#f6f7f8]"
      />
      <button type="button" aria-label="Perbesar" className="relative mr-[3px] flex h-6 w-6 items-center justify-center rounded-full border border-[#7c8188] bg-linear-to-b from-white to-[#dfe2e6]">
        <span className="absolute h-[3px] w-3 bg-[#6b6f75]" />
        <span className="absolute h-3 w-[3px] bg-[#6b6f75]" />
      </button>
    </footer>
  );
}

export default function App() {
  return (
    <div className="relative flex h-screen flex-col overflow-hidden bg-white font-['Open_Sans',sans-serif]">
      <Defs />
      <TitleBar />
      <Tabs />
      <Ribbon />
      <div className="h-1 shrink-0 border-t border-[#8b9197] bg-[#dfe4e8]" />
      <div className="flex min-h-0 flex-1">
        <div className="flex min-w-0 flex-1 flex-col">
          <main className="flex min-h-0 flex-1 flex-col overflow-hidden bg-[#e9e9e9] bg-[repeating-linear-gradient(to_right,rgba(255,255,255,0.3)_0px,rgba(255,255,255,0.3)_1px,transparent_1px,transparent_5px),repeating-linear-gradient(to_bottom,rgba(255,255,255,0.3)_0px,rgba(255,255,255,0.3)_1px,transparent_1px,transparent_5px)] font-[Lato,sans-serif] [font-variant-ligatures:none]">
            <Banner />
            <Tables />
            <Chart />
          </main>
          <HScroll />
        </div>
        <VScroll />
      </div>
      <StatusBar />
      <span className="absolute bottom-0 left-[1835px] h-px w-[39px] bg-[#2f7fb5]" />
      <svg viewBox="0 0 18 28" className="absolute left-[1065px] top-[147px] h-7 w-[18px]" aria-hidden="true">
        <path d="M1 1v23l5-5 4 8 3-1-3-8h7z" fill="#fff" stroke="#000" strokeWidth="1.200" />
      </svg>
    </div>
  );
}
